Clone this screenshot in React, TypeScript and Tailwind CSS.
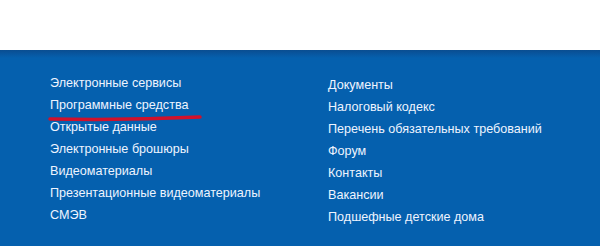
const LEFT = [
  'Электронные сервисы',
  'Программные средства',
  'Открытые данные',
  'Электронные брошюры',
  'Видеоматериалы',
  'Презентационные видеоматериалы',
  'СМЭВ',
];

const RIGHT = [
  'Документы',
  'Налоговый кодекс',
  'Перечень обязательных требований',
  'Форум',
  'Контакты',
  'Вакансии',
  'Подшефные детские дома',
];

export default function App() {
  return (
    <div className="h-[246px] w-[600px] overflow-hidden bg-white font-['Liberation_Sans',Arial,sans-serif]">
      <div className="h-[50px]" />
      <div className="relative h-[196px] bg-[#0560ae]">
        <div className="h-[8px] bg-gradient-to-b from-[#0a4d91] to-[#0560ae]" />
        <div className="flex pt-[14px] text-[12.6px] text-[#eef4ff]">
          <ul className="w-[328px] pl-[50px]">
            {LEFT.map((item) => (
              <li key={item} className="h-[22px] leading-[22px]">
                {item}
              </li>
            ))}
          </ul>
          <ul className="pt-[2px]">
            {RIGHT.map((item) => (
              <li key={item} className="h-[22px] leading-[22px]">
                {item}
              </li>
            ))}
          </ul>
        </div>
        {/* red hand-drawn underline */}
        <svg className="absolute left-[46px] top-[61px]" width="160" height="12" viewBox="0 0 160 12">
          <path
            d="M4 8 Q 80 9.5 154 6"
            stroke="#d0112b"
            strokeWidth="3.5"
            strokeLinecap="round"
            fill="none"
          />
        </svg>
      </div>
    </div>
  );
}
